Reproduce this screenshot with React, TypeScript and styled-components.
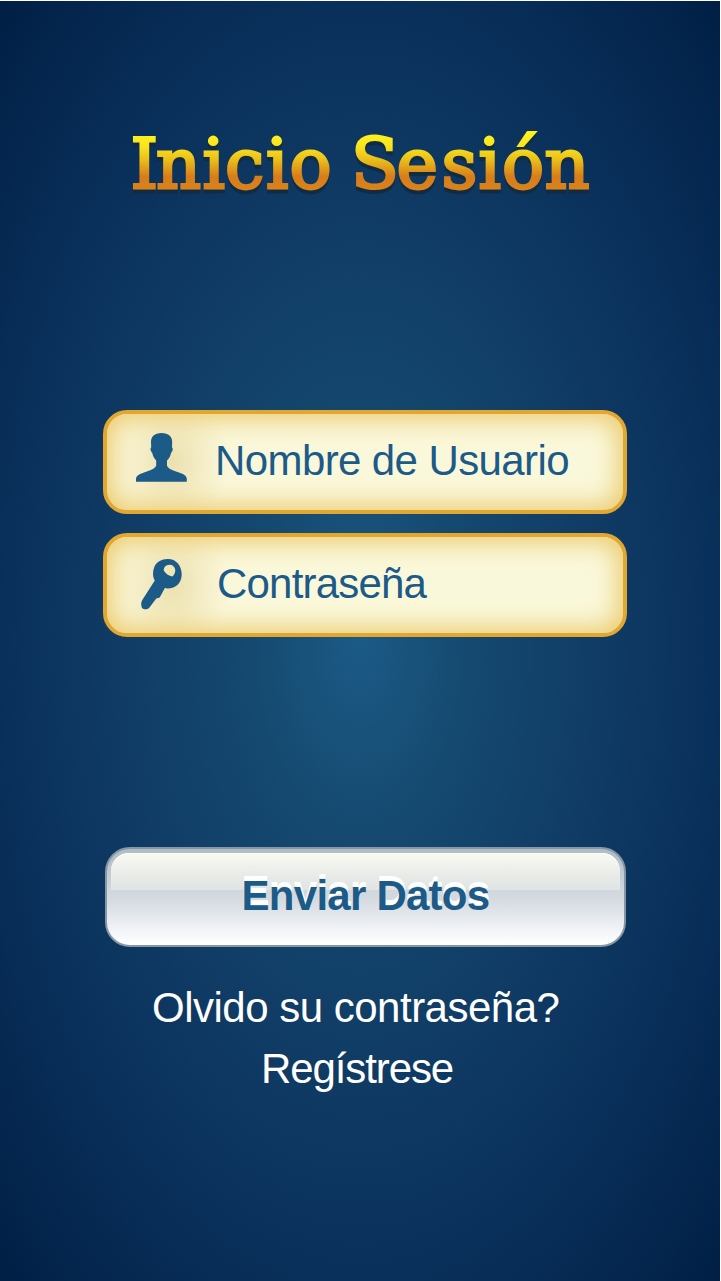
import React from "react";
import styled, { createGlobalStyle } from "styled-components";

const GlobalStyle = createGlobalStyle`
  * { box-sizing: border-box; }
  body { margin: 0; background: #fff; font-family: "Liberation Sans", Arial, sans-serif; }
`;

const Screen = styled.main`
  width: 720px;
  height: 1280px;
  margin-top: 1px;
  display: flex;
  flex-direction: column;
  background: radial-gradient(ellipse farthest-corner at 50% 50%, #1b5a86 0%, #15496f 22%, #0f3a63 50%, #09305a 70%, #011f45 100%);
`;

const Title = styled.h1`
  margin: 114px 0 0 120px;
  width: 480px;
  height: 95px;
  line-height: 0;
  font-family: "DejaVu Serif", serif;
  font-weight: 400;
  svg { filter: drop-shadow(0 4px 0.5px #102c45); overflow: visible; }
`;

const Form = styled.form`
  margin: 200px 0 0 103px;
  width: 524px;
  display: flex;
  flex-direction: column;
  gap: 19px;
`;

const Field = styled.label`
  height: 104px;
  display: flex;
  border: 4px solid #e1a731;
  border-radius: 24px;
  background: radial-gradient(ellipse 58px 68px at 65px 50%, #ebe0ae 0%, rgba(241, 232, 190, 0.65) 55%, rgba(249, 246, 217, 0) 100%), #faf8db;
  box-shadow: inset 0 0 26px 5px #ebca6c;
`;

const IconSlot = styled.span`
  width: 108px;
  flex: none;
  svg { display: block; }
`;

const FieldText = styled.span<{ $indent: number; $spacing: number }>`
  margin: 23px 0 0 ${(p) => p.$indent}px;
  font-size: 42px;
  line-height: 48px;
  letter-spacing: ${(p) => p.$spacing}px;
  white-space: nowrap;
  color: #1c5a88;
`;

const Submit = styled.button`
  position: relative;
  margin: 191px 0 0 2px;
  width: 521px;
  height: 100px;
  padding: 0 0 3px 0;
  border: 2px solid #8797a5;
  border-radius: 25px;
  background: linear-gradient(#afbdc6 0, #b5c2ca 12px, #d0d8de 42px, #d3dae0 50px, #eff1f5 78px, #fff 100%);
  font: bold 42px/48px "Liberation Sans", Arial, sans-serif;
  letter-spacing: -0.75px;
  color: #1c5a88;
  text-shadow: 0 -5px 0 #fff;
`;

const Gloss = styled.span`
  position: absolute;
  top: 4px;
  left: 4px;
  right: 4px;
  height: 37px;
  border-radius: 18px 18px 0 0;
  background: linear-gradient(#fafaf2, #e9ece8 55%, #dfe4e4);
  box-shadow: inset 0 1px 1px #fff;
`;

const SubmitText = styled.span`
  position: relative;
`;

const Links = styled.nav`
  width: 720px;
  margin-top: 37px;
  display: flex;
  flex-direction: column;
  align-items: flex-start;
  gap: 13px;
`;

const Link = styled.a<{ $left: number; $spacing: number }>`
  margin-left: ${(p) => p.$left}px;
  font-size: 42px;
  line-height: 48px;
  letter-spacing: ${(p) => p.$spacing}px;
  color: #fff;
  white-space: nowrap;
`;

const UserIcon = () => (
  <svg width="108" height="96" viewBox="107 414 108 96" fill="#1c5a88">
    <path d="M161.500 433 C154.500 433 151 436.500 151 442 L151.200 447.500 C150 448 150.500 451.500 152.300 453 C152.700 456 154.500 458.500 156.200 460.500 V465.500 C155 469 150 470.500 144 472.500 C139 474.300 136 476 136 479 V481.800 H186.800 V479 C186.800 476 184 474.300 179 472.500 C173 470.500 168 469 167 465.500 V460.500 C169 458.500 170.500 456 171 453 C172.800 451.500 173.300 448 172 447.500 L172.200 442 C172.200 436.500 168.500 433 161.500 433 Z" />
  </svg>
);

const KeyIcon = () => (
  <svg width="108" height="96" viewBox="107 537 108 96" fill="#1c5a88">
    <path fillRule="evenodd" d="M167.500 559 C175.500 558.700 181.700 565 181.700 574.500 C181.500 583 176 588.500 167.500 588.500 C166 588.200 165.200 587.500 164.600 588.500 L160 597 C159 598.500 156.500 597.500 155.500 599.500 L149.500 607.500 C148 610 143.500 609.500 142 608 C141 605.500 140.700 602.500 142.300 600 L154.800 580.500 C152.500 577 152.500 571.500 154.500 566.500 C157 561.500 161.500 559.200 167.500 559 Z M169.500 564.700 C165.500 564.900 163.500 567.500 163.800 570.500 C165.500 573.500 168.800 576 172.500 576.500 C174.800 574.500 175.800 571.500 175 568.800 C174 566 172 564.600 169.500 564.700 Z" />
  </svg>
);

export default function App() {
  return (
    <>
      <GlobalStyle />
      <Screen>
        <Title>
          <svg width="480" height="95" viewBox="120 115 480 95">
            <defs>
              <linearGradient id="gold" gradientUnits="userSpaceOnUse" x1="0" y1="134" x2="0" y2="190">
                <stop offset="0" stopColor="#fff020" />
                <stop offset="0.22" stopColor="#f9e41c" />
                <stop offset="0.45" stopColor="#ebc01a" />
                <stop offset="0.76" stopColor="#d77d1a" />
                <stop offset="1" stopColor="#d9831b" />
              </linearGradient>
            </defs>
            <text
              y="187.700"
              x="130.500 156 202.500 225 266 289.500 331 351 396.500 441.500 478.500 502 544.500"
              fontSize="70"
              fill="url(#gold)"
              stroke="url(#gold)"
              strokeWidth="2.800"
            >
              Inicio Sesión
            </text>
          </svg>
        </Title>
        <Form>
          <Field>
            <IconSlot><UserIcon /></IconSlot>
            <FieldText $indent={0} $spacing={-0.6}>Nombre de Usuario</FieldText>
          </Field>
          <Field>
            <IconSlot><KeyIcon /></IconSlot>
            <FieldText $indent={2} $spacing={-0.8}>Contraseña</FieldText>
          </Field>
          <Submit type="button">
            <Gloss />
            <SubmitText>Enviar Datos</SubmitText>
          </Submit>
        </Form>
        <Links>
          <Link $left={152} $spacing={-0.5}>Olvido su contraseña?</Link>
          <Link $left={261} $spacing={-1.1}>Regístrese</Link>
        </Links>
      </Screen>
    </>
  );
}
